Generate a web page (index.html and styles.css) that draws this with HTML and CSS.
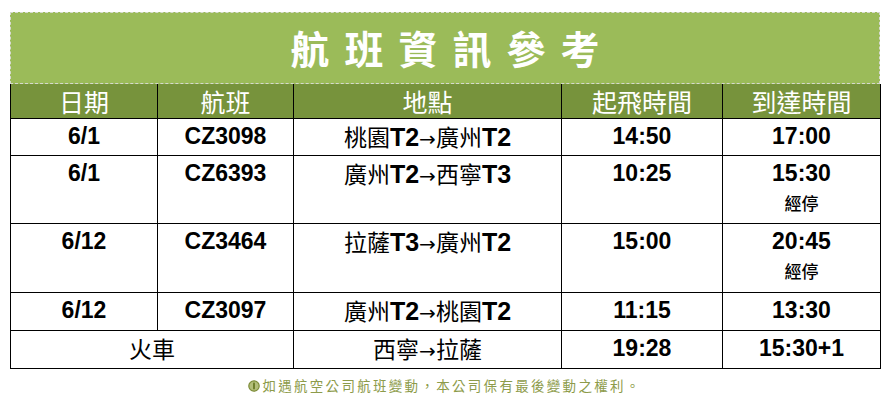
FILE: index.html
```html
<!DOCTYPE html>
<html lang="zh-Hant">
<head>
<meta charset="utf-8">
<title>航班資訊參考</title>
<link rel="stylesheet" href="styles.css">
</head>
<body>
<div class="wrap">
  <div class="title">航班資訊參考</div>
  <table class="flights">
    <colgroup>
      <col class="c1"><col class="c2"><col class="c3"><col class="c4"><col class="c5">
    </colgroup>
    <thead>
      <tr>
        <th>日期</th><th>航班</th><th>地點</th><th>起飛時間</th><th>到達時間</th>
      </tr>
    </thead>
    <tbody>
      <tr class="r1">
        <td class="num">6/1</td><td class="num">CZ3098</td>
        <td class="place">桃園<b>T2</b><span class="arr">→</span>廣州<b>T2</b></td>
        <td class="num">14:50</td><td class="num">17:00</td>
      </tr>
      <tr class="r2">
        <td class="num">6/1</td><td class="num">CZ6393</td>
        <td class="place">廣州<b>T2</b><span class="arr">→</span>西寧<b>T3</b></td>
        <td class="num">10:25</td><td class="num">15:30<span class="stop">經停</span></td>
      </tr>
      <tr class="r3">
        <td class="num">6/12</td><td class="num">CZ3464</td>
        <td class="place">拉薩<b>T3</b><span class="arr">→</span>廣州<b>T2</b></td>
        <td class="num">15:00</td><td class="num">20:45<span class="stop">經停</span></td>
      </tr>
      <tr class="r4">
        <td class="num">6/12</td><td class="num">CZ3097</td>
        <td class="place">廣州<b>T2</b><span class="arr">→</span>桃園<b>T2</b></td>
        <td class="num">11:15</td><td class="num">13:30</td>
      </tr>
      <tr class="r5">
        <td class="place" colspan="2">火車</td>
        <td class="place">西寧<span class="arr">→</span>拉薩</td>
        <td class="num">19:28</td><td class="num">15:30+1</td>
      </tr>
    </tbody>
  </table>
  <p class="note"><svg class="info" width="12" height="12" viewBox="0 0 12 12"><circle cx="6" cy="6" r="5.2" fill="#b3be7a" stroke="#7d8c38" stroke-width="1.2"/><rect x="5" y="2.6" width="2" height="6.8" rx="0.8" fill="#6f7f2c"/></svg>如遇航空公司航班變動，本公司保有最後變動之權利。</p>
</div>
</body>
</html>
```
FILE: styles.css
```css
html, body {
  margin: 0;
  padding: 0;
  background: #ffffff;
}

.wrap {
  width: 870px;
  margin: 12px 0 0 10px;
  font-family: "Liberation Sans", "Noto Sans CJK TC", sans-serif;
}

.title {
  box-sizing: border-box;
  height: 72px;
  background: #9bbb59;
  border: 1px dashed #d6d9cf;
  color: #ffffff;
  font-family: "Noto Sans CJK TC", sans-serif;
  font-weight: 700;
  font-size: 39px;
  letter-spacing: 15px;
  text-indent: 15px;
  line-height: 68px;
  text-align: center;
}

.flights {
  width: 870px;
  table-layout: fixed;
  border-collapse: collapse;
}

.c1 { width: 147px; }
.c2 { width: 136px; }
.c3 { width: 268px; }
.c4 { width: 161px; }
.c5 { width: 158px; }

.flights th {
  height: 34px;
  padding: 0;
  background: #77933c;
  color: #ffffff;
  font-family: "Noto Sans CJK TC", sans-serif;
  font-weight: 400;
  font-size: 25px;
  line-height: 34px;
  border-left: 1px solid #000;
  border-right: 1px solid #000;
  border-bottom: 1px solid #000;
}

.flights td {
  padding: 3px 0 0 0;
  border: 1px solid #000;
  vertical-align: top;
  text-align: center;
  line-height: 28px;
  color: #000;
}

.r1 td { height: 33px; }
.r2 td { height: 64px; }
.r3 td { height: 65px; }
.r4 td { height: 34px; }
.r5 td { height: 34px; }

.num {
  font-family: "Liberation Sans", sans-serif;
  font-weight: 700;
  font-size: 23px;
}

.place {
  font-family: "Noto Sans CJK TC", sans-serif;
  font-weight: 400;
  font-size: 23px;
}

.place b {
  font-family: "Liberation Sans", sans-serif;
  font-weight: 700;
  font-size: 25px;
}

.arr {
  font-family: "DejaVu Sans", sans-serif;
  font-size: 20px;
}

.stop {
  display: block;
  margin-top: 3px;
  font-family: "Noto Sans CJK TC", sans-serif;
  font-weight: 500;
  font-size: 17px;
  line-height: 26px;
}

.note {
  margin: 7px 0 0 0;
  text-align: center;
  font-family: "Noto Sans CJK TC", sans-serif;
  font-weight: 400;
  font-size: 13.5px;
  letter-spacing: 2.3px;
  line-height: 18px;
  color: #8d9b4a;
}

.info {
  vertical-align: -1px;
  margin-right: 2px;
}
```
